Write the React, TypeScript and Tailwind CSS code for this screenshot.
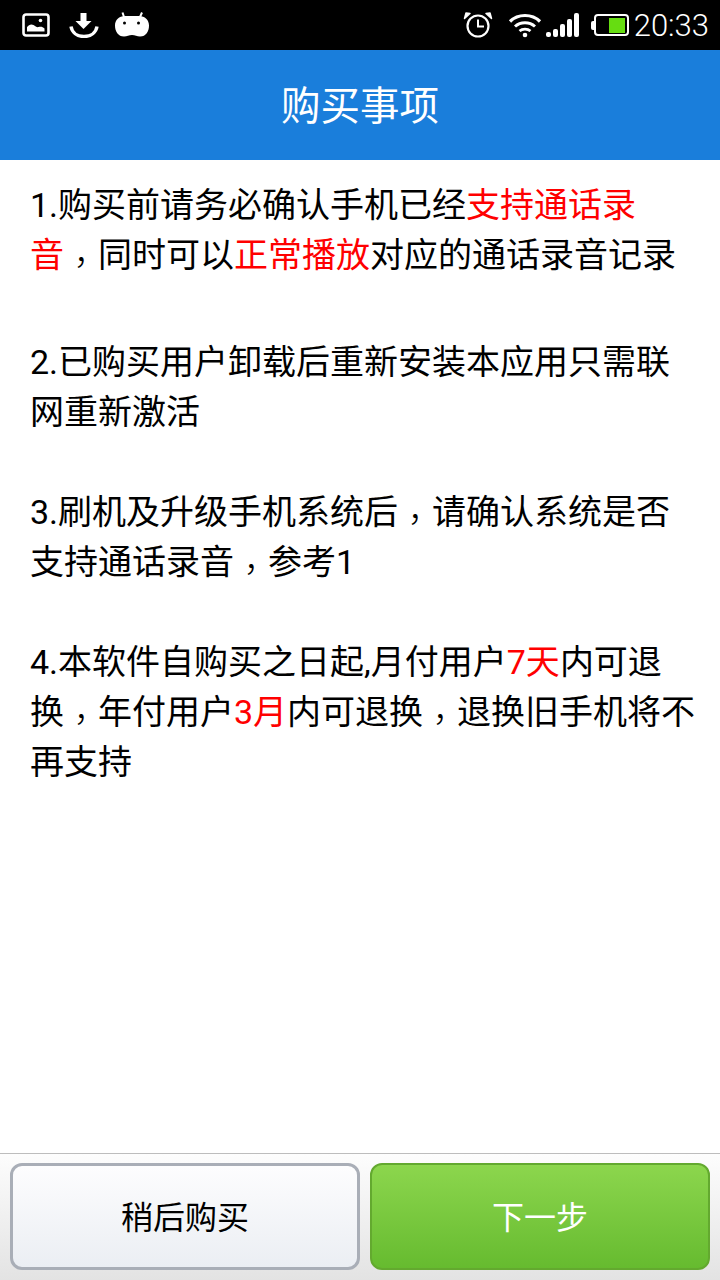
import React from "react";

const R = ({ children }: { children: React.ReactNode }) => <span className="text-[#ff0000]">{children}</span>;
const C = () => <span className="align-[-8px] font-['Noto_Sans_CJK_TC'] font-light leading-[0]">，</span>;

export default function App() {
  return (
    <div className="flex h-[1280px] w-[720px] flex-col overflow-hidden bg-white font-['Roboto','Noto_Sans_CJK_SC',sans-serif]">
      <div className="flex h-[50px] shrink-0 items-center justify-between bg-black pl-[22px] pr-[11px]">
        <div className="flex items-center gap-[19px]">
          <svg width="28" height="24" viewBox="0 0 28 24">
            <rect x="1.5" y="1.5" width="25" height="21" rx="2.5" fill="none" stroke="#fff" strokeWidth="2.6" />
            <path d="M5 18.5v-4.2c2-3 4.5-3.6 6.5-2.2 2 1.3 3.500 2.600 5 2 2-.8 4-.7 6 1.500v2.900z" fill="#fff" />
            <circle cx="18.500" cy="7.500" r="1.800" fill="#fff" />
          </svg>
          <svg width="30" height="26" viewBox="0 0 30 26">
            <path d="M11.500 1h6v8h5l-8 8-8-8h5z" fill="#fff" />
            <path d="M2 14.500c1 6 6 10 13 10s12-4 13-10" fill="none" stroke="#fff" strokeWidth="3.400" />
          </svg>
          <svg width="34" height="26" viewBox="0 0 34 26" className="-ml-[3px]">
            <path d="M9 5 7.500 0.500M25 5 27 0.500" stroke="#fff" strokeWidth="2" fill="none" />
            <path d="M10 4h14c6 0 10 4 10 9.500 0 6-3 11-9 11-3 0-5-1.500-8-1.500s-5 1.500-8 1.500c-6 0-9-5-9-11C0 8 4 4 10 4z" fill="#fff" />
            <circle cx="9.500" cy="11" r="1.500" fill="#000" />
            <circle cx="23.500" cy="11" r="1.500" fill="#000" />
          </svg>
        </div>
        <div className="flex items-center">
          <svg width="30" height="28" viewBox="0 0 30 28" className="mr-[15px]">
            <circle cx="15" cy="15" r="10.500" fill="none" stroke="#fff" strokeWidth="2.200" />
            <path d="M15 8.500V15.500H21" fill="none" stroke="#fff" strokeWidth="2" />
            <path d="M1.500 7.500 7 2.500 3 2zM28.500 7.500 23 2.500 27 2z" fill="#fff" stroke="#fff" strokeWidth="1.500" strokeLinejoin="round" />
          </svg>
          <svg width="34" height="26" viewBox="0 0 34 26" className="mr-[4px]">
            <path d="M2 9.500C10 1.500 24 1.500 32 9.500" fill="none" stroke="#fff" strokeWidth="3.200" />
            <path d="M7 14.500C12.500 9.500 21.500 9.500 27 14.500" fill="none" stroke="#fff" strokeWidth="3" />
            <path d="M11.500 19C14.500 16.500 19.500 16.500 22.500 19" fill="none" stroke="#fff" strokeWidth="2.800" />
            <circle cx="17" cy="23" r="2.300" fill="#fff" />
          </svg>
          <div className="mr-[12px] flex items-end gap-[2px]">
            <div className="h-[5px] w-[5px] rounded-[2px] bg-white" />
            <div className="h-[8px] w-[5px] rounded-[2px] bg-white" />
            <div className="h-[13px] w-[5px] rounded-[2px] bg-white" />
            <div className="h-[18px] w-[5px] rounded-[2px] bg-white" />
            <div className="h-[24px] w-[5px] rounded-[2px] bg-white" />
          </div>
          <div className="mr-[5px] flex items-center">
            <div className="h-[9px] w-[3px] rounded-l-[2px] bg-white" />
            <div className="flex h-[22px] w-[35px] items-center justify-end rounded-[4px] border-[2.500px] border-white pr-[2px]">
              <div className="h-[15px] w-[16px] bg-[#66dd11]" />
            </div>
          </div>
          <span className="text-[31px] font-light leading-none text-white">20:33</span>
        </div>
      </div>

      <div className="flex h-[110px] shrink-0 items-center justify-center bg-[#1a7edb] pt-[3px] text-[39.500px] text-white">购买事项</div>

      <div className="flex flex-1 flex-col gap-[50px] pl-[30px] pr-[20px] pt-[20px] text-[34px] leading-[50px] text-black">
        <p className="mb-[7px]">
          1.购买前请务必确认手机已经<R>支持通话录音</R><C />同时可以<R>正常播放</R>对应的通话录音记录
        </p>
        <p>2.已购买用户卸载后重新安装本应用只需联网重新激活</p>
        <p>3.刷机及升级手机系统后<C />请确认系统是否支持通话录音<C />参考1</p>
        <p>
          4.本软件自购买之日起,月付用户<R>7天</R>内可退换<C />年付用户<R>3月</R>内可退换<C />退换旧手机将不再支持
        </p>
      </div>

      <div className="flex h-[127px] shrink-0 gap-[10px] border-t-[1.500px] border-[#bdbdbd] bg-gradient-to-b from-[#fdfdfd] to-[#e3e3e3] px-[10px] pt-[9px]">
        <button className="flex h-[107px] w-[350px] items-center justify-center rounded-[12px] border-[3px] border-[#a9aeb7] bg-gradient-to-b from-[#fdfdfe] to-[#ebeef3] pt-[3px] text-[32px] text-black">
          稍后购买
        </button>
        <button className="flex h-[107px] w-[340px] items-center justify-center rounded-[12px] border-[2px] border-[#63a92f] bg-gradient-to-b from-[#8cd64d] to-[#66bb2f] pt-[3px] text-[32px] text-white">
          下一步
        </button>
      </div>
    </div>
  );
}
